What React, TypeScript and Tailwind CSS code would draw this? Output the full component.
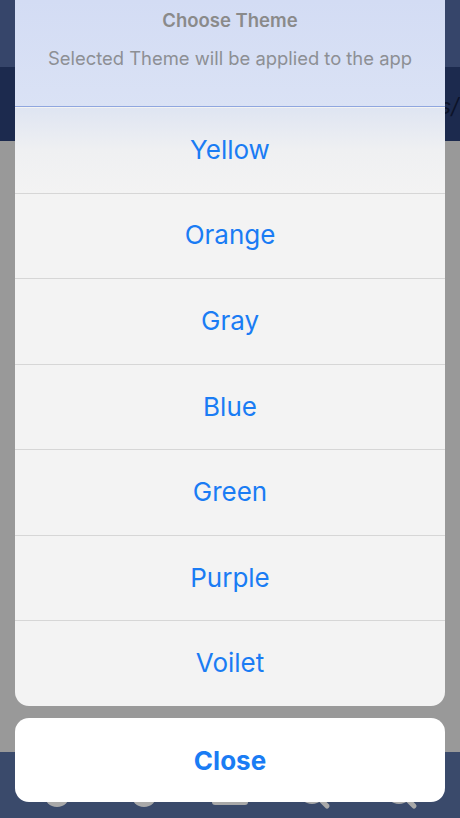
import React from "react";

const items = ["Yellow", "Orange", "Gray", "Blue", "Green", "Purple", "Voilet"];

export default function App() {
  return (
    <div
      className="relative w-[460px] h-[818px] overflow-hidden"
      style={{ fontFamily: "Inter, 'Noto Sans', sans-serif" }}
    >
      {/* background app */}
      <div className="flex flex-col h-full">
        <div className="h-[67px] bg-[#36456a]" />
        <div className="h-[74px] bg-[#1c2a4e] flex items-center justify-end overflow-hidden">
          <span className="text-[22px] italic text-[#0c1329] mr-[-8px] mt-[5px]">ls/1</span>
        </div>
        <div className="flex-1 bg-[#999999]" />
        <div className="h-[66px] bg-[#3a4a6b] px-[14px] pt-[27px] grid grid-cols-5">
          <div className="flex justify-center">
            <svg width="30" height="30" viewBox="0 0 30 30">
              <circle cx="15" cy="15" r="13" fill="#a9a9a9" />
            </svg>
          </div>
          <div className="flex justify-center">
            <svg width="30" height="30" viewBox="0 0 30 30">
              <circle cx="15" cy="15" r="13" fill="#a9a9a9" />
            </svg>
          </div>
          <div className="flex justify-center">
            <svg width="40" height="30" viewBox="0 0 40 30">
              <rect x="2" y="4" width="36" height="22" rx="3" fill="#a9a9a9" />
            </svg>
          </div>
          <div className="flex justify-center">
            <svg width="40" height="34" viewBox="0 0 40 34">
              <circle cx="16" cy="12" r="11" fill="none" stroke="#a9a9a9" strokeWidth="4" />
              <line x1="24" y1="20" x2="31" y2="27" stroke="#a9a9a9" strokeWidth="5" strokeLinecap="round" />
            </svg>
          </div>
          <div className="flex justify-center">
            <svg width="40" height="34" viewBox="0 0 40 34">
              <circle cx="16" cy="12" r="11" fill="none" stroke="#a9a9a9" strokeWidth="4" />
              <line x1="24" y1="20" x2="31" y2="27" stroke="#a9a9a9" strokeWidth="5" strokeLinecap="round" />
            </svg>
          </div>
        </div>
      </div>

      {/* action sheet overlay */}
      <div className="absolute inset-0 px-[15px] flex flex-col">
        <div className="h-[706px] flex flex-col rounded-b-[14px] overflow-hidden">
          <div className="h-[107px] shrink-0 flex flex-col items-center bg-gradient-to-b from-[#d3dcf4] to-[#dae2f5] border-b border-[#8fa6df]">
            <div className="mt-[8px] text-[18.5px] font-semibold text-[#8a8a8a] leading-[25px]">
              Choose Theme
            </div>
            <div className="mt-[13px] text-[18.4px] text-[#8d8f94] leading-[25px]">
              Selected Theme will be applied to the app
            </div>
          </div>
          {items.map((it, i) => (
            <div
              key={it}
              className={
                "flex-1 basis-0 flex items-center justify-center text-[26px] text-[#1a7cf4] border-t pb-[2px] " +
                (i === 0
                  ? "border-transparent bg-gradient-to-b from-[#dfe5f2] via-[#eff0f2] to-[#f3f3f3]"
                  : "bg-[#f3f3f3] border-[#d6d6d6]")
              }
            >
              {it}
            </div>
          ))}
        </div>
        <div className="mt-[12px] h-[84px] rounded-[14px] bg-white flex items-center justify-center text-[26px] font-bold text-[#1a7cf4]">
          Close
        </div>
      </div>
    </div>
  );
}
